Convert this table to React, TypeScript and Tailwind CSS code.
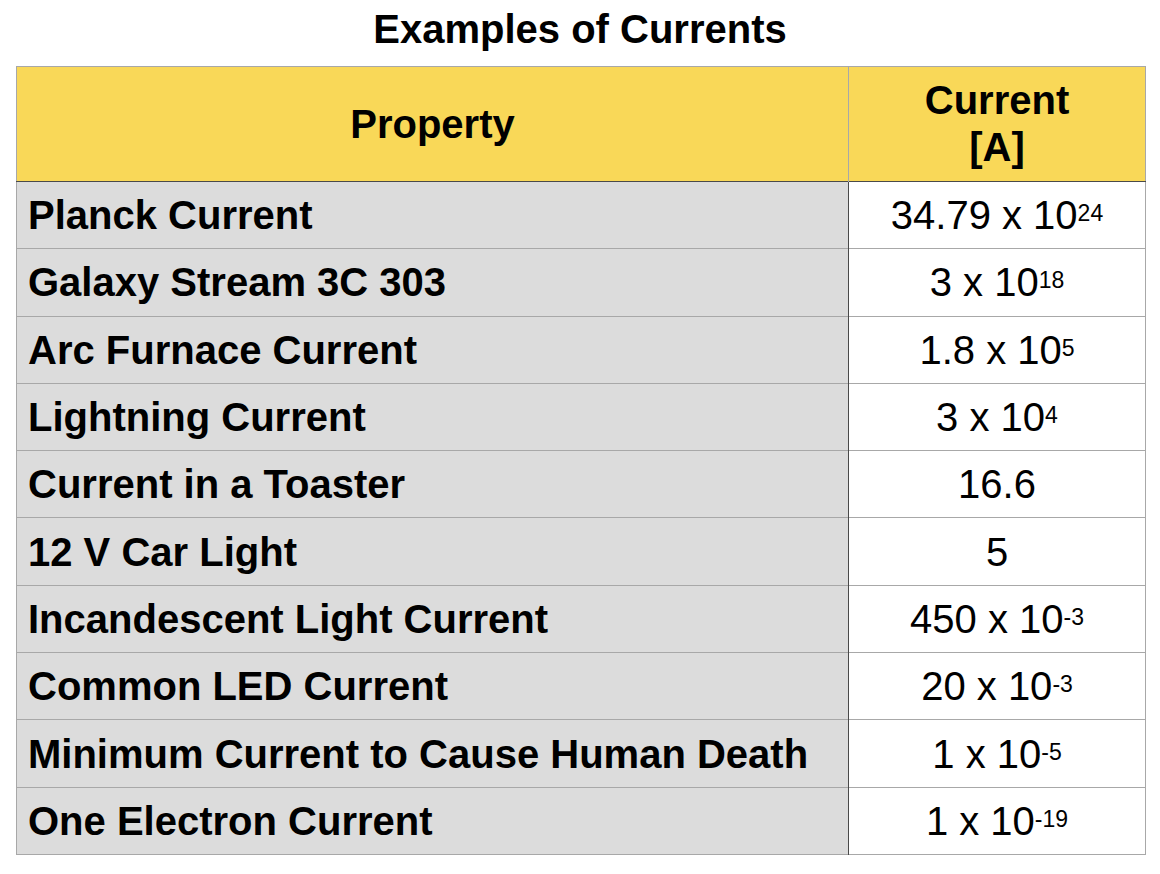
const rows: { label: string; base: string; exp?: string }[] = [
  { label: 'Planck Current', base: '34.79 x 10', exp: '24' },
  { label: 'Galaxy Stream 3C 303', base: '3 x 10', exp: '18' },
  { label: 'Arc Furnace Current', base: '1.8 x 10', exp: '5' },
  { label: 'Lightning Current', base: '3 x 10', exp: '4' },
  { label: 'Current in a Toaster', base: '16.6' },
  { label: '12 V Car Light', base: '5' },
  { label: 'Incandescent Light Current', base: '450 x 10', exp: '-3' },
  { label: 'Common LED Current', base: '20 x 10', exp: '-3' },
  { label: 'Minimum Current to Cause Human Death', base: '1 x 10', exp: '-5' },
  { label: 'One Electron Current', base: '1 x 10', exp: '-19' },
]

export default function App() {
  return (
    <div className="w-[1160px] h-[874px] bg-white font-['Liberation_Sans',Arial,sans-serif] text-black">
      <h1 className="h-[66px] pt-[6px] text-center text-[40px] leading-[46px] font-bold">Examples of Currents</h1>
      <table className="ml-[16px] w-[1130px] border-collapse border border-[#a8a8a8]">
        <thead>
          <tr className="h-[115px] bg-[#f9d858] border-b border-[#4a4a4a]">
            <th className="w-[832px] text-[40px] leading-[40px] font-bold text-center border-r border-[#a8a8a8]">Property</th>
            <th className="text-[40px] leading-[47px] font-bold text-center">
              Current
              <br />
              [A]
            </th>
          </tr>
        </thead>
        <tbody>
          {rows.map((r) => (
            <tr key={r.label} className="h-[67.3px] border-b border-[#a8a8a8]">
              <td className="bg-[#dcdcdc] pl-[11px] text-[40px] font-bold leading-none border-r border-[#4a4a4a]">
                {r.label}
              </td>
              <td className="bg-white text-center text-[40px] leading-none">
                {r.base}
                {r.exp && <span className="text-[23px] align-[8px]">{r.exp}</span>}
              </td>
            </tr>
          ))}
        </tbody>
      </table>
    </div>
  )
}
